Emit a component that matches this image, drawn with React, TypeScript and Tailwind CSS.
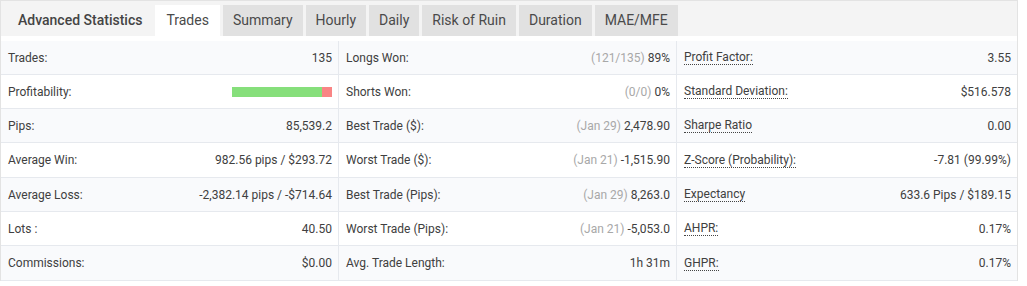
import React from "react";

type Row = { label: string; value: React.ReactNode; note?: string; dotted?: boolean };

const col1: Row[] = [
  { label: "Trades:", value: "135" },
  { label: "Profitability:", value: "bar" },
  { label: "Pips:", value: "85,539.2" },
  { label: "Average Win:", value: "982.56 pips / $293.72" },
  { label: "Average Loss:", value: "-2,382.14 pips / -$714.64" },
  { label: "Lots :", value: "40.50" },
  { label: "Commissions:", value: "$0.00" },
];

const col2: Row[] = [
  { label: "Longs Won:", note: "(121/135)", value: "89%" },
  { label: "Shorts Won:", note: "(0/0)", value: "0%" },
  { label: "Best Trade ($):", note: "(Jan 29)", value: "2,478.90" },
  { label: "Worst Trade ($):", note: "(Jan 21)", value: "-1,515.90" },
  { label: "Best Trade (Pips):", note: "(Jan 29)", value: "8,263.0" },
  { label: "Worst Trade (Pips):", note: "(Jan 21)", value: "-5,053.0" },
  { label: "Avg. Trade Length:", value: "1h 31m" },
];

const col3: Row[] = [
  { label: "Profit Factor:", value: "3.55", dotted: true },
  { label: "Standard Deviation:", value: "$516.578", dotted: true },
  { label: "Sharpe Ratio", value: "0.00", dotted: true },
  { label: "Z-Score (Probability):", value: "-7.81 (99.99%)", dotted: true },
  { label: "Expectancy", value: "633.6 Pips / $189.15", dotted: true },
  { label: "AHPR:", value: "0.17%", dotted: true },
  { label: "GHPR:", value: "0.17%", dotted: true },
];

const tabs = ["Trades", "Summary", "Hourly", "Daily", "Risk of Ruin", "Duration", "MAE/MFE"];

const Bar = () => (
  <div className="flex h-[10px] w-[100px]">
    <div className="h-full w-[90px] bg-[#86df7b]" />
    <div className="h-full w-[10px] bg-[#f98585]" />
  </div>
);

const Column = ({ rows, last }: { rows: Row[]; last?: boolean }) => (
  <div className={last ? "flex flex-col" : "flex flex-col border-r border-[#e6e9ee]"}>
    {rows.map((r, i) => (
      <div
        key={r.label}
        className={
          "flex items-center justify-between border-b border-[#e6e9ee] pl-[7px] pr-[6px] " +
          (i === 3 || i === 6 ? "h-[35px] " : "h-[34px] ") +
          (i % 2 === 0 ? "bg-[#f9fafc]" : "bg-white")
        }
      >
        <span className={r.dotted ? "border-b border-dotted border-[#444] leading-[14px]" : ""}>
          {r.label}
        </span>
        {r.value === "bar" ? (
          <Bar />
        ) : (
          <span>
            {r.note && <span className="text-[#a8a8a8]">{r.note} </span>}
            {r.value}
          </span>
        )}
      </div>
    ))}
  </div>
);

const App = () => {
  return (
    <div className="bg-white h-[286px] w-[1027px] font-['Roboto',sans-serif] text-[12px] text-[#404040]">
      <div className="w-[1018px] border-x border-t border-[#e3e3e3]">
        <div className="flex h-[35px] items-end bg-[#f4f4f4] pl-[17px]">
          <div className="mr-[13px] flex h-[31px] items-center text-[14px] font-medium text-[#444]">
            Advanced Statistics
          </div>
          <div className="flex gap-[3px]">
            {tabs.map((t, i) => (
              <div
                key={t}
                className={
                  "flex h-[31px] items-center px-[10px] text-[14px] text-[#4a4a4a] " +
                  (i === 0 ? "bg-white px-[11px]" : "bg-[#e1e1e1]")
                }
              >
                {t}
              </div>
            ))}
          </div>
        </div>
        <div className="pt-[5px]">
          <div className="grid grid-cols-[338px_338px_1fr]">
            <Column rows={col1} />
            <Column rows={col2} />
            <Column rows={col3} last />
          </div>
        </div>
      </div>
    </div>
  );
};

export default App;
